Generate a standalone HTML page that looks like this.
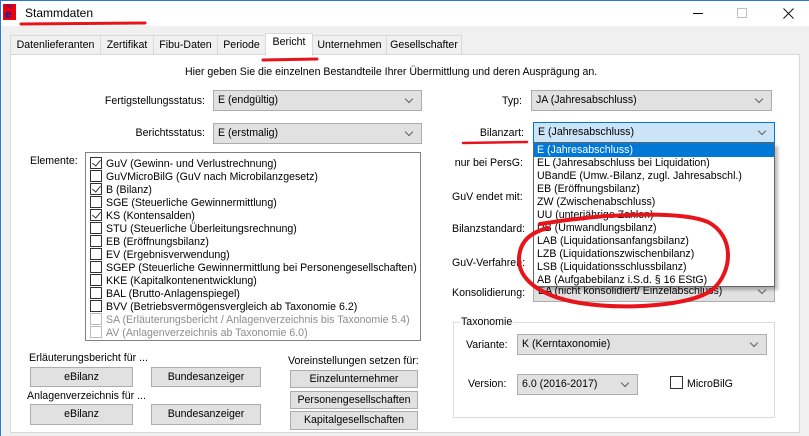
<!DOCTYPE html>
<html><head><meta charset="utf-8">
<style>
*{box-sizing:border-box;margin:0;padding:0}
body{width:809px;height:436px;overflow:hidden;background:#f0f0f0;font-family:"Liberation Sans",Arial,sans-serif;font-size:10.6px;color:#000;position:relative}
.a{position:absolute;white-space:nowrap}
.r{text-align:right}
.title{position:absolute;left:0;top:0;width:809px;height:26px;background:#fff;border-top:1px solid #2b79d0}
.tab{position:absolute;top:35px;height:20px;border:1px solid #d9d9d9;border-bottom:none;background:#f0f0f0;text-align:center;line-height:18px}
.panel{position:absolute;left:10px;top:54px;width:790px;height:379px;background:#fff;border:1px solid #d9d9d9}
.cb{position:absolute;height:21px;background:#e1e1e1;border:1px solid #adadad;line-height:19px;padding-left:4px}
.cb::after{content:"";position:absolute;right:9px;top:5px;width:5px;height:5px;border-right:1px solid #606060;border-bottom:1px solid #606060;transform:rotate(45deg)}
.btn{position:absolute;background:#e1e1e1;border:1px solid #adadad;text-align:center}
.chk{display:inline-block;width:12px;height:12px;border:1px solid #333;vertical-align:-2px;margin-right:4px;position:relative;background:#fff}
.chk.g{border-color:#bcbcbc}
.chk.on::after{content:"";position:absolute;left:3px;top:0px;width:4px;height:7px;border-right:1px solid #333;border-bottom:1px solid #333;transform:rotate(40deg)}
.li{position:absolute;left:4px;height:13px;line-height:13px}
.dd{position:absolute;left:533px;top:143px;width:242px;height:144px;background:#fff;border:1px solid #646464;box-shadow:3px 3px 3px rgba(0,0,0,.25)}
.dd div{height:13px;line-height:13px;padding-left:3px}
</style></head><body>
<div style="position:absolute;left:0;top:0;width:1px;height:436px;background:#2b79d0;z-index:5"></div>
<div class="title">
 <div class="a" style="left:3px;top:3px;width:13px;height:16px;background:#e8000e"></div>
 <div class="a" style="left:6px;top:3px;font-size:5px;color:#1a1aa0">my</div>
 <div class="a" style="left:5px;top:6px;font-size:12px;font-weight:bold;color:#1a1aa0">e</div>
 <div class="a" style="left:25px;top:5px;font-size:12px">Stammdaten</div>
 <div class="a" style="left:693px;top:12px;width:10px;height:1px;background:#000"></div>
 <div class="a" style="left:737px;top:7px;width:10px;height:10px;border:1px solid #c0c0c0"></div>
 <svg class="a" style="left:783px;top:7px" width="11" height="11"><path d="M0.5 0.5L10.5 10.5M10.5 0.5L0.5 10.5" stroke="#111" stroke-width="1"/></svg>
</div>
<div class="tab" style="left:10px;width:91px">Datenlieferanten</div>
<div class="tab" style="left:100px;width:54px">Zertifikat</div>
<div class="tab" style="left:153px;width:65px">Fibu-Daten</div>
<div class="tab" style="left:217px;width:49px">Periode</div>
<div class="tab" style="left:312px;width:75px">Unternehmen</div>
<div class="tab" style="left:386px;width:76px">Gesellschafter</div>
<div class="panel"></div>
<div class="tab" style="left:265px;top:33px;width:48px;height:23px;background:#fff;z-index:2;line-height:17px">Bericht</div>

<div class="a" style="left:185px;top:66px">Hier geben Sie die einzelnen Bestandteile Ihrer Übermittlung und deren Ausprägung an.</div>
<div class="a r" style="left:40px;width:165px;top:95px">Fertigstellungsstatus:</div>
<div class="cb" style="left:213px;top:90px;width:209px">E (endgültig)</div>
<div class="a r" style="left:40px;width:165px;top:127px">Berichtsstatus:</div>
<div class="cb" style="left:213px;top:123px;width:209px">E (erstmalig)</div>

<div class="a r" style="left:440px;width:82px;top:95px">Typ:</div>
<div class="cb" style="left:531px;top:90px;width:241px">JA (Jahresabschluss)</div>
<div class="a r" style="left:440px;width:84px;top:127px">Bilanzart:</div>
<div class="cb" style="left:533px;top:122px;width:242px;background:#cce4f7;border-color:#0078d7">E (Jahresabschluss)</div>
<div class="a r" style="left:440px;width:83px;top:157px">nur bei PersG:</div>
<div class="a" style="left:452px;top:191px">GuV endet mit:</div>
<div class="a" style="left:452px;top:223px">Bilanzstandard:</div>
<div class="a" style="left:452px;top:257px">GuV-Verfahren:</div>
<div class="a" style="left:452px;top:287px">Konsolidierung:</div>
<div class="cb" style="left:533px;top:281px;width:242px">EA (nicht konsolidiert/ Einzelabschluss)</div>

<div class="a" style="left:30px;top:155px">Elemente:</div>
<div class="a" style="left:85px;top:152px;width:336px;height:189px;border:1px solid #828282;background:#fff">
 <div class="li" style="top:4px"><span class="chk on"></span>GuV (Gewinn- und Verlustrechnung)</div>
 <div class="li" style="top:17px"><span class="chk"></span>GuVMicroBilG (GuV nach Microbilanzgesetz)</div>
 <div class="li" style="top:30px"><span class="chk on"></span>B (Bilanz)</div>
 <div class="li" style="top:43px"><span class="chk"></span>SGE (Steuerliche Gewinnermittlung)</div>
 <div class="li" style="top:56px"><span class="chk on"></span>KS (Kontensalden)</div>
 <div class="li" style="top:69px"><span class="chk"></span>STU (Steuerliche Überleitungsrechnung)</div>
 <div class="li" style="top:82px"><span class="chk"></span>EB (Eröffnungsbilanz)</div>
 <div class="li" style="top:95px"><span class="chk"></span>EV (Ergebnisverwendung)</div>
 <div class="li" style="top:108px"><span class="chk"></span>SGEP (Steuerliche Gewinnermittlung bei Personengesellschaften)</div>
 <div class="li" style="top:121px"><span class="chk"></span>KKE (Kapitalkontenentwicklung)</div>
 <div class="li" style="top:134px"><span class="chk"></span>BAL (Brutto-Anlagenspiegel)</div>
 <div class="li" style="top:147px"><span class="chk"></span>BVV (Betriebsvermögensvergleich ab Taxonomie 6.2)</div>
 <div class="li" style="top:160px;color:#8d8d8d"><span class="chk g"></span>SA (Erläuterungsbericht / Anlagenverzeichnis bis Taxonomie 5.4)</div>
 <div class="li" style="top:173px;color:#8d8d8d"><span class="chk g"></span>AV (Anlagenverzeichnis ab Taxonomie 6.0)</div>
</div>

<div class="a" style="left:29px;top:352px">Erläuterungsbericht für ...</div>
<div class="btn" style="left:30px;top:367px;width:103px;height:20px;line-height:18px">eBilanz</div>
<div class="btn" style="left:151px;top:367px;width:110px;height:20px;line-height:18px">Bundesanzeiger</div>
<div class="a" style="left:27px;top:390px">Anlagenverzeichnis für ...</div>
<div class="btn" style="left:30px;top:404px;width:103px;height:21px;line-height:19px">eBilanz</div>
<div class="btn" style="left:151px;top:404px;width:110px;height:21px;line-height:19px">Bundesanzeiger</div>
<div class="a" style="left:288px;top:355px">Voreinstellungen setzen für:</div>
<div class="btn" style="left:290px;top:370px;width:128px;height:18px;line-height:16px">Einzelunternehmer</div>
<div class="btn" style="left:290px;top:391px;width:128px;height:18px;line-height:16px">Personengesellschaften</div>
<div class="btn" style="left:290px;top:411px;width:128px;height:19px;line-height:17px">Kapitalgesellschaften</div>

<div class="a" style="left:453px;top:322px;width:322px;height:96px;border:1px solid #dcdcdc"></div>
<div class="a" style="left:460px;top:316px;background:#fff;padding:0 1px">Taxonomie</div>
<div class="a" style="left:466px;top:339px">Variante:</div>
<div class="cb" style="left:517px;top:334px;width:250px">K (Kerntaxonomie)</div>
<div class="a" style="left:468px;top:378px">Version:</div>
<div class="cb" style="left:517px;top:374px;width:121px">6.0 (2016-2017)</div>
<div class="a" style="left:670px;top:376px"><span class="chk" style="width:13px;height:13px"></span>MicroBilG</div>

<div class="dd">
 <div style="background:#0078d7;color:#fff">E (Jahresabschluss)</div>
 <div>EL (Jahresabschluss bei Liquidation)</div>
 <div>UBandE (Umw.-Bilanz, zugl. Jahresabschl.)</div>
 <div>EB (Eröffnungsbilanz)</div>
 <div>ZW (Zwischenabschluss)</div>
 <div>UU (unterjährige Zahlen)</div>
 <div>UB (Umwandlungsbilanz)</div>
 <div>LAB (Liquidationsanfangsbilanz)</div>
 <div>LZB (Liquidationszwischenbilanz)</div>
 <div>LSB (Liquidationsschlussbilanz)</div>
 <div>AB (Aufgabebilanz i.S.d. § 16 EStG)</div>
</div>

<svg class="a" style="left:0;top:0;z-index:10" width="809" height="436">
 <g fill="none" stroke="#e8141c" stroke-linecap="round">
  <path d="M21 24 L145 23" stroke-width="3"/>
  <path d="M263 60 L317 59" stroke-width="3"/>
  <path d="M463 143 L527 142" stroke-width="2.5"/>
  <path d="M540 224 C600 214 680 210 708 222 C735 236 733 272 712 290 C690 306 625 310 580 303 C538 296 518 278 519 258 C520 240 532 232 548 228" stroke-width="4"/>
 </g>
</svg>
</body></html>
